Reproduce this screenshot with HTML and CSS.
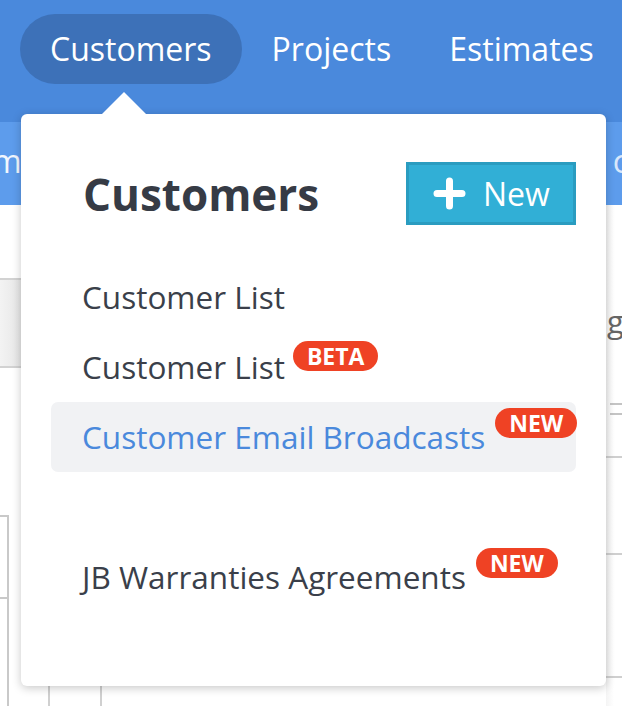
FILE: index.html
```html
<!DOCTYPE html>
<html lang="en">
<head>
    <meta charset="UTF-8">
    <title>Customers menu</title>
    <link rel="stylesheet" href="styles.css">
</head>
<body>
    <nav class="topnav">
        <a href="#" class="active">Customers</a>
        <a href="#">Projects</a>
        <a href="#">Estimates</a>
    </nav>

    <div class="subnav">
        <span class="sub-left">m</span>
        <span class="sub-right">c</span>
    </div>

    <div class="content">
        <div class="side-left">
            <div class="toolbar"></div>
            <div class="table-box"></div>
            <div class="table-box tall"></div>
        </div>
        <div class="middle">
            <div class="cols">
                <div class="col"></div>
                <div class="col"></div>
            </div>
        </div>
        <div class="side-right">
            <div class="side-word">g</div>
            <div class="dots"></div>
            <div class="rule first"></div>
            <div class="rule second"></div>
            <div class="rule third"></div>
        </div>
    </div>

    <div class="dropdown">
        <div class="dropdown-head">
            <h2>Customers</h2>
            <button type="button" class="btn-new">
                <svg width="33" height="33" viewBox="0 0 33 33">
                    <path d="M16.5 4 V29 M4 16.5 H29" stroke="#fff" stroke-width="7" stroke-linecap="round" fill="none"/>
                </svg>
                <span>New</span>
            </button>
        </div>
        <ul class="menu">
            <li><a href="#">Customer List</a></li>
            <li><a href="#">Customer List</a><span class="badge beta">BETA</span></li>
            <li class="current"><a href="#">Customer Email Broadcasts</a><span class="badge">NEW</span></li>
            <li class="spacer"></li>
            <li><a href="#">JB Warranties Agreements</a><span class="badge">NEW</span></li>
        </ul>
    </div>
</body>
</html>
```

FILE: styles.css
```css
body {
    margin: 0;
    width: 622px;
    height: 706px;
    overflow: hidden;
    position: relative;
    font-family: "Open Sans", "Liberation Sans", sans-serif;
    background: #fff;
}

/* top navigation */
.topnav {
    display: flex;
    align-items: flex-start;
    height: 122px;
    box-sizing: border-box;
    padding: 14px 0 0 20px;
    background: #4a89dc;
}
.topnav a {
    display: block;
    height: 70px;
    line-height: 70px;
    padding: 0 29px;
    border-radius: 35px;
    font-size: 32px;
    color: #fff;
    text-decoration: none;
}
.topnav a.active {
    padding: 0 30px;
    margin-right: 1px;
    background: #3d71b8;
}

.subnav {
    display: flex;
    justify-content: space-between;
    height: 83px;
    line-height: 78px;
    background: #5d9cec;
    font-size: 32px;
    color: #f2f7fe;
    overflow: hidden;
}
.sub-left {
    margin-left: -8px;
}
.sub-right {
    margin-right: -6px;
    color: #d8e7fb;
}

/* page behind the menu */
.content {
    display: flex;
    height: 501px;
}
.side-left {
    width: 21px;
}
.toolbar {
    margin-top: 73px;
    height: 86px;
    border-top: 2px solid #d2d2d2;
    border-bottom: 2px solid #d2d2d2;
    background: linear-gradient(to right, #f3f3f3, #e6e6e6);
}
.table-box {
    margin-top: 147px;
    width: 7px;
    height: 80px;
    border-top: 2px solid #c9c9c9;
    border-right: 2px solid #c9c9c9;
}
.table-box.tall {
    margin-top: 0;
    height: 120px;
}
.middle {
    flex: 1;
}
.cols {
    display: flex;
    margin-top: 481px;
    margin-left: 27px;
    height: 30px;
}
.col {
    width: 50px;
    border-left: 2px solid #d0d0d0;
}
.side-right {
    width: 16px;
    color: #666;
    background: linear-gradient(to right, #f4f4f4, #fff 8px);
}
.side-word {
    margin-top: 96px;
    margin-left: 1px;
    font-size: 31px;
    line-height: 40px;
}
.dots {
    margin-top: 62px;
    margin-left: 4px;
    height: 8px;
    border-top: 2px dashed #c4c4c4;
    border-bottom: 2px dashed #c4c4c4;
}
.rule {
    border-top: 2px solid #cfcfcf;
}
.rule.first {
    margin-top: 41px;
}
.rule.second {
    margin-top: 95px;
}
.rule.third {
    margin-top: 121px;
}

/* dropdown card */
.dropdown {
    position: absolute;
    left: 21px;
    top: 114px;
    width: 585px;
    height: 572px;
    box-sizing: border-box;
    padding-top: 48px;
    background: #fff;
    border-radius: 6px;
    box-shadow: 0 2px 10px rgba(0,0,0,0.22);
}
.dropdown::before {
    content: "";
    position: absolute;
    left: 81px;
    top: -22px;
    border-left: 22px solid transparent;
    border-right: 22px solid transparent;
    border-bottom: 22px solid #fff;
}
.dropdown-head {
    display: flex;
    justify-content: space-between;
    align-items: center;
    padding: 0 30px 0 62px;
}
.dropdown-head h2 {
    margin: 0;
    font-size: 44px;
    font-weight: bold;
    color: #363b45;
}
.btn-new {
    display: flex;
    align-items: center;
    gap: 17px;
    width: 170px;
    height: 63px;
    box-sizing: border-box;
    padding: 0 0 0 24px;
    background: #31afd6;
    border: 3px solid #2a9cc0;
    border-radius: 0;
    font-family: inherit;
    font-size: 32px;
    color: #fff;
    cursor: pointer;
}

.menu {
    list-style: none;
    margin: 37px 30px 0;
    padding: 0;
}
.menu li {
    height: 70px;
    line-height: 70px;
    padding-left: 31px;
    border-radius: 7px;
    white-space: nowrap;
}
.menu li a {
    font-size: 31.5px;
    color: #3a3f4a;
    text-decoration: none;
}
.menu li.current {
    background: #f1f2f4;
}
.menu li.current a {
    color: #4a89dc;
}
.badge {
    display: inline-block;
    vertical-align: top;
    margin: 6px 0 0 10px;
    height: 30px;
    line-height: 30px;
    padding: 0 14px;
    border-radius: 15px;
    background: #ef4224;
    color: #fff;
    font-size: 23px;
    font-weight: bold;
}
.badge.beta {
    margin-top: 9px;
    margin-left: 8px;
}
```
